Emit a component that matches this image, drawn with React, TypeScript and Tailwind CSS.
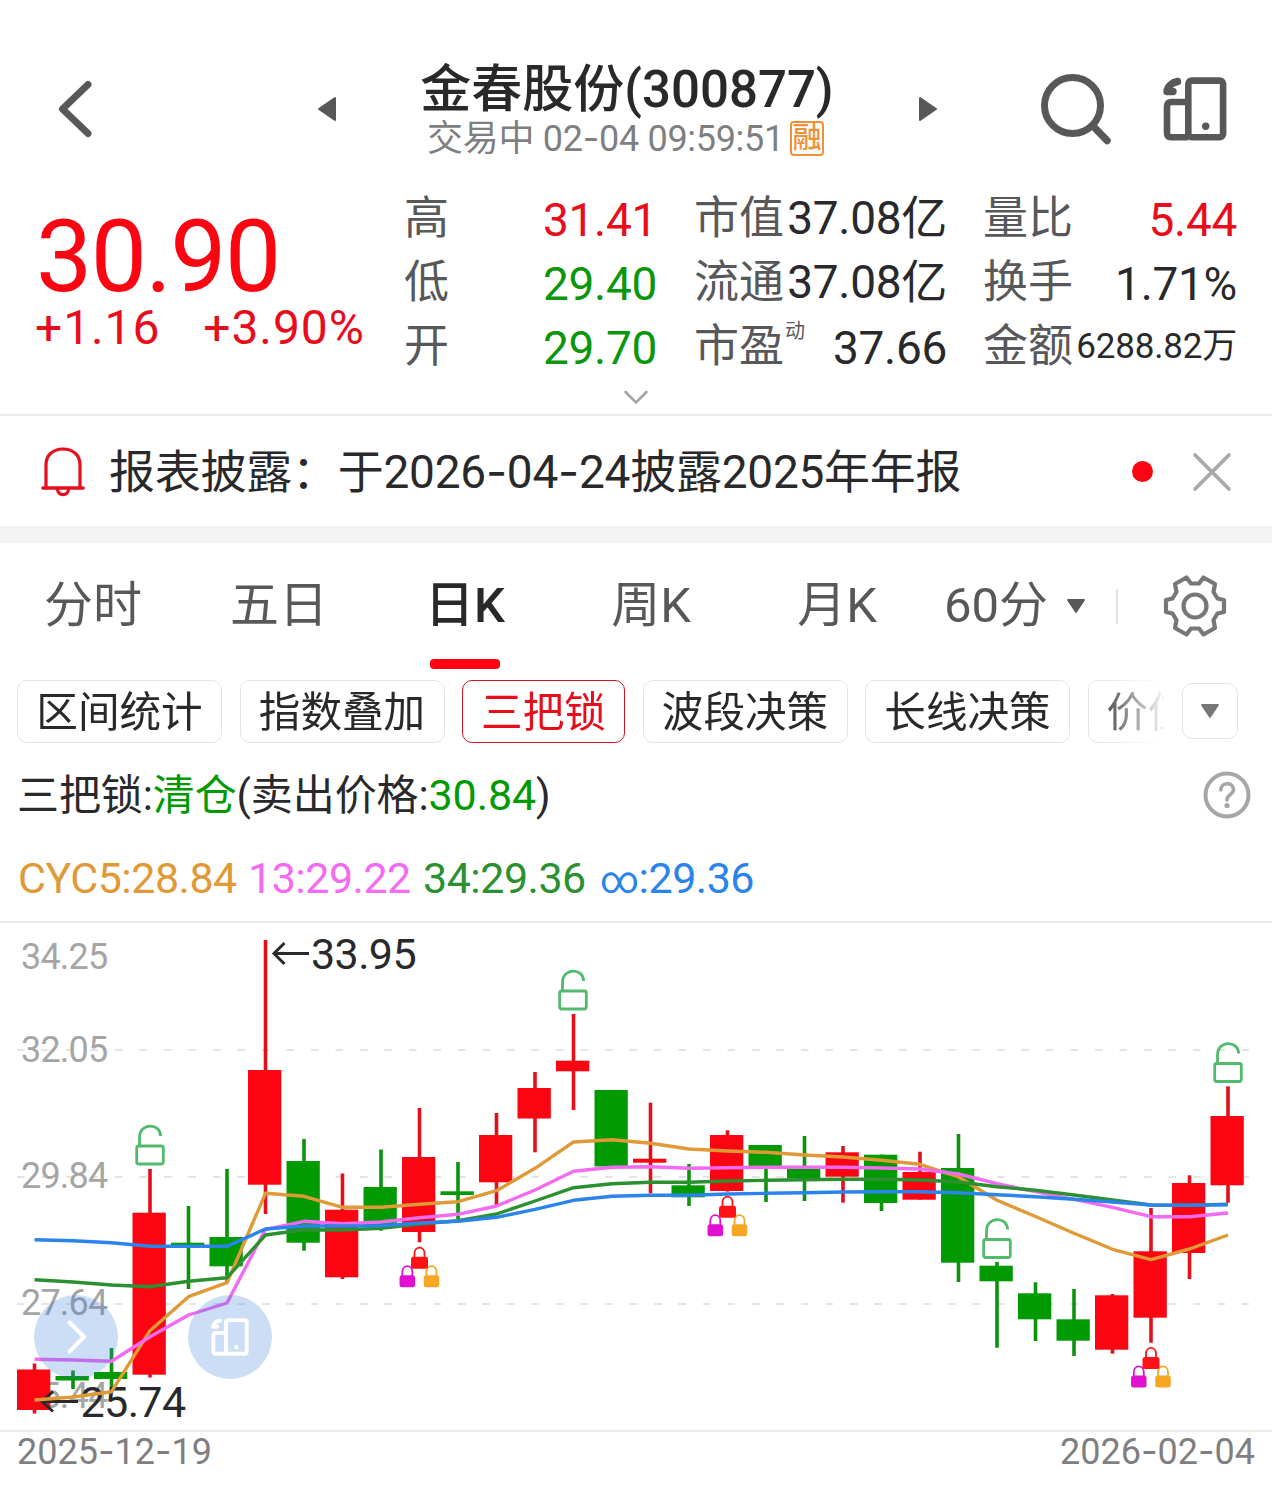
import { Fragment } from 'react'
import clsx from 'clsx'

const RED = '#fa0511'
const GREEN = '#029a02'

type Candle = [up: 0 | 1, high: number, top: number, bottom: number, low: number]

const candles: Candle[] = [
  [1, 1363.5, 1369.5, 1410, 1413.5],
  [0, 1370.5, 1376, 1380.5, 1389],
  [0, 1348, 1372, 1379, 1391],
  [1, 1169, 1212.7, 1374.7, 1377.5],
  [0, 1206, 1242.7, 1247, 1289],
  [0, 1169, 1237, 1266.3, 1283],
  [1, 940, 1070, 1184.7, 1214],
  [0, 1139, 1161, 1242.7, 1250.7],
  [1, 1173.5, 1209.7, 1277.3, 1279],
  [0, 1149.5, 1187, 1225, 1230.7],
  [1, 1108, 1157, 1232, 1242.3],
  [0, 1162, 1191.3, 1195, 1219],
  [1, 1113, 1135, 1182.3, 1207],
  [1, 1072, 1088, 1118.5, 1152.3],
  [1, 1014, 1060.7, 1071.3, 1110],
  [0, 1090, 1090, 1166.5, 1166.5],
  [1, 1102.7, 1158.7, 1162.7, 1193.3],
  [0, 1164, 1185.3, 1197.3, 1206],
  [1, 1130.3, 1135, 1191, 1191.7],
  [0, 1145, 1145, 1166, 1202],
  [0, 1136, 1168, 1178.3, 1201],
  [1, 1146, 1152.3, 1176.7, 1202.7],
  [0, 1154.7, 1154.7, 1203, 1211],
  [1, 1151.7, 1172, 1199.7, 1199.7],
  [0, 1134, 1168, 1262.7, 1282],
  [0, 1262, 1265.7, 1281.3, 1347.7],
  [0, 1282.3, 1293.3, 1319.3, 1341],
  [0, 1289, 1319.3, 1340.7, 1356],
  [1, 1294, 1295.3, 1349.7, 1353.7],
  [1, 1208, 1251.3, 1317.7, 1342.7],
  [1, 1175.3, 1183, 1253, 1279],
  [1, 1086.3, 1116, 1185.3, 1202.7],
]

const averages = [
  {
    color: '#df9a37',
    points: [1400, 1397, 1391.7, 1330.7, 1296.7, 1282.7, 1193.3, 1196.3, 1207.3, 1207.3, 1204.3, 1201.7, 1190.7, 1168.3, 1142, 1139.7, 1143.3, 1149, 1151, 1152.3, 1155, 1157, 1160.3, 1164.3, 1177, 1200.3, 1216.5, 1233.3, 1249.3, 1259.7, 1249, 1235],
  },
  {
    color: '#f26bf2',
    points: [1359.3, 1360, 1361.3, 1336.7, 1315, 1303, 1229.3, 1221.3, 1223.7, 1222, 1217.7, 1214.3, 1206, 1190, 1171.3, 1167.3, 1166.7, 1168.3, 1167.7, 1167.3, 1167.3, 1167.3, 1168, 1169, 1174, 1183.7, 1191.7, 1199.3, 1207.3, 1216.7, 1216.7, 1213],
  },
  {
    color: '#2a9030',
    points: [1279.7, 1282, 1285, 1286.7, 1281.3, 1277.7, 1235, 1229.7, 1230, 1228.3, 1224, 1220.7, 1214, 1201, 1187.7, 1183.7, 1182.3, 1182.3, 1181, 1180.3, 1179.7, 1179.3, 1179.3, 1180, 1182, 1186.7, 1190.3, 1195, 1200, 1205, 1205.3, 1204.3],
  },
  {
    color: '#2b83ec',
    points: [1239.7, 1240.7, 1242.7, 1246.3, 1246.3, 1246.3, 1229, 1226, 1226, 1225.7, 1223, 1221.3, 1217.3, 1209.3, 1200.3, 1196.3, 1195.3, 1195.3, 1194, 1193.3, 1192.7, 1192, 1191.7, 1191.7, 1192.7, 1194.7, 1196.7, 1199.3, 1202, 1205, 1205.3, 1204.7],
  },
]

const priceLabels: [string, number][] = [
  ['34.25', 969],
  ['32.05', 1061.5],
  ['29.84', 1188],
  ['27.64', 1315],
  ['25.44', 1407.5],
]

const candleX = (i: number) => 34.5 + 38.5 * i

// Roboto's hyphen is too short next to its digits, Inter's is wide enough
function Num({ children }: { children: string }) {
  return (
    <>
      {children.split('-').map((part, i) => (
        <Fragment key={i}>
          {i > 0 && <span className="font-['Inter'] font-normal">-</span>}
          {part}
        </Fragment>
      ))}
    </>
  )
}

function PhoneIcon({ className }: { className?: string }) {
  return (
    <svg viewBox="0 0 64 64" fill="none" stroke="currentColor" strokeWidth="6.6" className={className}>
      <rect x="25.3" y="3.6" width="34.8" height="56.6" rx="3.5" />
      <path d="M25.3 25H8.5Q4 25 4 29.5V56Q4 60.2 8.5 60.2H25.3" />
      <path d="M14.5 4.500C9 5.500 4.500 9.500 4 14.500H10" strokeWidth="7.4" strokeLinecap="round" strokeLinejoin="round" />
      <circle cx="42.7" cy="49.3" r="3.7" fill="currentColor" stroke="none" />
    </svg>
  )
}

function Triangle({ className }: { className?: string }) {
  return (
    <svg viewBox="0 0 20 14" className={className}>
      <path d="M2 1H18L10 13Z" fill="currentColor" stroke="currentColor" strokeWidth="1.8" strokeLinejoin="round" />
    </svg>
  )
}

function Header() {
  return (
    <header className="flex h-[160px] items-center pt-[58px] text-[#58585a]">
      <svg viewBox="0 0 36 58" className="ml-[57px] h-[58px] w-[36px]" fill="none" stroke="currentColor" strokeWidth="7" strokeLinecap="round" strokeLinejoin="round">
        <path d="M31 4.5L5.5 29L31 53.5" />
      </svg>
      <svg viewBox="0 0 20 26" className="ml-[224px] h-[26px] w-[20px]">
        <path d="M18 2V24L2 13Z" fill="currentColor" stroke="currentColor" strokeWidth="2" strokeLinejoin="round" />
      </svg>
      <div className="ml-[70px] w-[440px] whitespace-nowrap text-center">
        <h1 className="pt-px text-[51px] font-medium leading-[57px] text-[#29292b]">金春股份(300877)</h1>
        <div className="flex items-center justify-center pr-[3px] text-[36px] leading-[40px] tracking-[-0.3px] text-[#7f7f81]">
          <span>
            交易中 <Num>02-04 09:59:51</Num>
          </span>
          <span className="ml-[6px] mt-px flex h-[35px] w-[34px] items-center justify-center rounded-[4px] border-2 border-[#f0913a] pb-px text-[29px] font-medium leading-[30px] tracking-normal text-[#f0913a]">
            融
          </span>
        </div>
      </div>
      <svg viewBox="0 0 20 26" className="ml-[71px] h-[26px] w-[20px]">
        <path d="M2 2V24L18 13Z" fill="currentColor" stroke="currentColor" strokeWidth="2" strokeLinejoin="round" />
      </svg>
      <svg viewBox="0 0 72 72" className="ml-[102px] size-[72px]" fill="none" stroke="currentColor" strokeLinecap="round">
        <circle cx="32.5" cy="32.5" r="28" strokeWidth="7" />
        <path d="M53 53L67 67.5" strokeWidth="7.4" />
      </svg>
      <PhoneIcon className="ml-[51px] size-[64px]" />
    </header>
  )
}

function StatRow({ label, value, sup, low = false, className }: {
  label: string
  value: string
  sup?: string
  low?: boolean
  className?: string
}) {
  return (
    <div className="flex h-[64px] items-start justify-between whitespace-nowrap">
      <span className="flex text-[45px] leading-[62px] text-[#58585a]">
        {label}
        {sup && <sup className="top-0 ml-px text-[20px] leading-[31px]">{sup}</sup>}
      </span>
      <span className={clsx(low ? 'leading-[64px]' : 'leading-[60px]', className ?? 'text-[46px] tracking-[-0.3px] text-[#29292b]')}>{value}</span>
    </div>
  )
}

function Quote() {
  return (
    <section className="flex h-[220px] pl-[34px] pr-[34px] pt-[28px]">
      <div className="w-[370px] pt-[22px] text-[#fa0511]">
        <div className="pl-[2px] text-[100px] leading-[94px] tracking-[-1.5px]">30.90</div>
        <div className="flex gap-[43px] whitespace-nowrap pl-px text-[48px] leading-[48px] tracking-[0.9px] text-[#e80d1b]">
          <span>+1.16</span>
          <span>+3.90%</span>
        </div>
      </div>
      <div className="w-[253px]">
        <StatRow label="高" value="31.41" low className="text-[46px] tracking-[-0.3px] text-[#e80d1b]" />
        <StatRow label="低" value="29.40" low className="text-[46px] tracking-[-0.3px] text-[#0c960c]" />
        <StatRow label="开" value="29.70" low className="text-[46px] tracking-[-0.3px] text-[#0c960c]" />
      </div>
      <div className="ml-[37px] w-[253px]">
        <StatRow label="市值" value="37.08亿" />
        <StatRow label="流通" value="37.08亿" />
        <StatRow label="市盈" sup="动" value="37.66" low />
      </div>
      <div className="ml-[36px] w-[254px]">
        <StatRow label="量比" value="5.44" low className="text-[46px] tracking-[-0.3px] text-[#e80d1b]" />
        <StatRow label="换手" value="1.71%" low />
        <StatRow label="金额" value="6288.82万" className="pt-px text-[35px] tracking-[-0.2px] text-[#29292b]" />
      </div>
    </section>
  )
}

function Notice() {
  return (
    <section className="flex h-[112px] items-center border-t-2 border-[#ebebeb] pt-px">
      <svg viewBox="0 0 44 52" className="ml-[41px] h-[52px] w-[44px]" fill="none" stroke="#e80d1b" strokeWidth="3.2">
        <path d="M5 42V19C5 9 12 3 22 3S39 9 39 19V42" />
        <path d="M2 42H42" strokeLinecap="round" strokeWidth="3.6" />
        <path d="M16.5 43C16.5 50.5 27.5 50.5 27.5 43" />
      </svg>
      <p className="ml-[24px] flex-1 whitespace-nowrap text-[46px] leading-[60px] tracking-[-0.25px] text-[#29292b]">
        <Num>报表披露：于2026-04-24披露2025年年报</Num>
      </p>
      <span className="size-[21px] rounded-full bg-[#fa0511]" />
      <svg viewBox="0 0 40 40" className="ml-[39px] mr-[40px] size-[40px]" fill="none" stroke="#a6a6a6" strokeWidth="3.6" strokeLinecap="round">
        <path d="M3 3L37 37M37 3L3 37" />
      </svg>
    </section>
  )
}

function PeriodTabs() {
  const tabs = ['分时', '五日', '日K', '周K', '月K']
  return (
    <nav className="flex h-[126px] items-center whitespace-nowrap text-[49px] leading-[60px] text-[#58585a]">
      {tabs.map((tab) => {
        const active = tab === '日K'
        return (
          <div key={tab} className={clsx('relative flex h-full w-[186px] items-center justify-center pb-px', active && 'font-medium text-[#29292b]')}>
            {tab}
            {active && <span className="absolute bottom-0 left-[58px] h-[10px] w-[70px] rounded-[4px] bg-[#fa0511]" />}
          </div>
        )
      })}
      <span className="ml-[14px] pb-px">60分</span>
      <Triangle className="ml-[18px] h-[14px] w-[20px]" />
      <span className="ml-[30px] h-[35px] w-[2px] bg-[#e2e2e2]" />
      <svg viewBox="0 0 64 64" className="ml-[45px] size-[64px]" fill="none" stroke="#77777a" strokeWidth="4.2" strokeLinejoin="round">
        <path d="M23.5 3.500L28 9.500H36L40.500 3.500L52 10L50.500 18L54.500 24.500L61 26V38L54.500 39.500L50.500 46L52 54L40.500 60.500L36 54.500H28L23.500 60.500L12 54L13.500 46L9.500 39.500L3 38V26L9.500 24.500L13.500 18L12 10Z" />
        <circle cx="32" cy="32" r="11.5" />
      </svg>
    </nav>
  )
}

function Chips() {
  const chips = ['区间统计', '指数叠加', '三把锁', '波段决策', '长线决策']
  return (
    <div className="flex h-[74px] items-start pl-[17px] pt-[11px] text-[41.6px] text-[#29292b]">
      <div className="flex w-[1147px] gap-[17.5px] overflow-hidden [mask-image:linear-gradient(to_right,black_1075px,transparent_1150px)]">
        {chips.map((chip) => (
          <div
            key={chip}
            className={clsx(
              'h-[63px] shrink-0 whitespace-nowrap rounded-[10px] border pt-px text-center leading-[62px]',
              chip === '三把锁' ? 'w-[163px] border-[#d01522] text-[#e80d1b]' : 'w-[205px] border-[#e4e4e4]',
            )}
          >
            {chip}
          </div>
        ))}
        <div className="h-[63px] w-[100px] shrink-0 overflow-hidden whitespace-nowrap rounded-l-[10px] border border-[#e4e4e4] pl-[18px] pt-px leading-[62px]">价值</div>
      </div>
      <button className="ml-[18px] mt-[3px] flex h-[56px] w-[56px] items-center justify-center rounded-[10px] border border-[#e4e4e4]">
        <Triangle className="h-[14px] w-[20px] text-[#77777a]" />
      </button>
    </div>
  )
}

function Indicators() {
  return (
    <section className="whitespace-nowrap">
      <div className="flex h-[103px] items-center justify-between pl-[17px] pr-[21px] text-[42px] text-[#29292b]">
        <p className="pt-[2px] tracking-[-0.1px]">
          三把锁:<span className="text-[#029a02]">清仓</span>(卖出价格:
          <span className="text-[43px] text-[#029a02]">30.84</span>)
        </p>
        <svg viewBox="0 0 48 48" className="size-[48px]" fill="none" stroke="#a6a6a6">
          <circle cx="24" cy="24" r="21.5" strokeWidth="4" />
          <path d="M17.8 19C17.8 10.5 30.5 10.8 30.5 18.5C30.5 23.5 24 23.5 24 29" strokeWidth="3.6" strokeLinecap="round" />
          <circle cx="24" cy="34.5" r="2.6" fill="#a6a6a6" stroke="none" />
        </svg>
      </div>
      <div className="mb-[10px] flex h-[65px] items-center pl-[18px] text-[43px] tracking-[-0.5px]">
        <span className="w-[230px] text-[#df9a37]">CYC5:28.84</span>
        <span className="w-[175px] text-[#f26bf2]">13:29.22</span>
        <span className="w-[177px] text-[#2a9030]">34:29.36</span>
        <span className="text-[#2b83ec]">
          <span className="text-[38px]">∞</span>:29.36
        </span>
      </div>
    </section>
  )
}

// open lock: marks a sell signal above the candle
function OpenLock({ x, y }: { x: number; y: number }) {
  return (
    <g transform={`translate(${x} ${y})`} fill="none" stroke="#52ba6c" strokeWidth="2.8">
      <rect x="-13.3" y="-18.500" width="26.600" height="18" rx="2" />
      <path d="M-10.500 -18.500V-27C-10.500 -42 10.300 -42 10.600 -28.500" />
    </g>
  )
}

function SmallLock({ x, y, color, w = 15.5 }: { x: number; y: number; color: string; w?: number }) {
  return (
    <g transform={`translate(${x} ${y})`}>
      <path d="M-5 -11V-15.500C-5 -23 5 -23 5 -15.500V-11" fill="none" stroke={color} strokeWidth="1.8" />
      <rect x={-w / 2} y="-12" width={w} height="12" rx="2.5" fill={color} />
    </g>
  )
}

function TripleLock({ x, y }: { x: number; y: number }) {
  return (
    <g>
      <SmallLock x={x - 12.2} y={y} color="#df10d0" />
      <SmallLock x={x + 12} y={y} color="#f5a623" />
      <SmallLock x={x} y={y - 18.5} color="#ff1216" w={17} />
    </g>
  )
}

function Chart() {
  return (
    <section className="relative h-[511px] border-y-2 border-[#ebebeb]">
      <svg viewBox="0 923 1272 507" className="block h-[507px] w-[1272px]">
        {[1050, 1177, 1304].map((y) => (
          <line key={y} x1="17" x2="1249" y1={y} y2={y} stroke="#e4e4e4" strokeWidth="2" strokeDasharray="7.5 17" />
        ))}
        {priceLabels.map(([label, y]) => (
          <text key={label} x="21" y={y} fontSize="36" letterSpacing="-0.8" fill="#a5a5a5">{label}</text>
        ))}
        {candles.map(([up, high, top, bottom, low], i) => {
          const x = candleX(i)
          return (
            <g key={i} fill={up ? RED : GREEN}>
              <rect x={x - 1.8} y={high} width="3.6" height={low - high} fill={up ? '#e3101c' : '#0c930c'} />
              <rect x={x - 17.5} y={top} width="33.3" height={bottom - top} />
            </g>
          )
        })}
        <g fill="none" stroke="#29292b" strokeWidth="3">
          <path d="M309 953.5H274M284.5 943L274 953.5L284.5 964" />
          <path d="M78 1401.5H42M53 1391.5L42 1401.5L53 1411.5" />
        </g>
        <g fontSize="43" letterSpacing="-0.6" fill="#29292b">
          <text x="311" y="969">33.95</text>
          <text x="80.5" y="1417">25.74</text>
        </g>
        {averages.map(({ color, points }) => (
          <polyline
            key={color}
            points={points.map((y, i) => `${candleX(i)},${y}`).join(' ')}
            fill="none"
            stroke={color}
            strokeWidth="3.4"
            strokeLinejoin="round"
          />
        ))}
        <OpenLock x={150} y={1164.5} />
        <OpenLock x={573} y={1009.5} />
        <OpenLock x={997} y={1258} />
        <OpenLock x={1228} y={1082} />
        <TripleLock x={419.5} y={1287.3} />
        <TripleLock x={727.5} y={1236.3} />
        <TripleLock x={1151} y={1387.5} />
      </svg>
      <button className="absolute left-[34px] top-[372px] flex size-[84px] items-center justify-center rounded-full bg-[#3278dc]/25">
        <svg viewBox="0 0 20 34" className="ml-[2px] h-[34px] w-[20px]" fill="none" stroke="#fff" strokeWidth="4" strokeLinecap="round" strokeLinejoin="round">
          <path d="M2.5 2.5L17 17L2.5 31.5" />
        </svg>
      </button>
      <button className="absolute left-[188px] top-[372px] flex size-[84px] items-center justify-center rounded-full bg-[#3278dc]/25 text-white">
        <PhoneIcon className="size-[38px]" />
      </button>
    </section>
  )
}

export default function App() {
  return (
    <main className="h-[1486px] w-[1272px] overflow-hidden bg-white font-['Roboto','Noto_Sans_CJK_SC',sans-serif]">
      <Header />
      <Quote />
      <div className="flex h-[34px] justify-center pt-[10px]">
        <svg viewBox="0 0 26 15" className="h-[15px] w-[26px]" fill="none" stroke="#a6a6a6" strokeWidth="2.6" strokeLinecap="round">
          <path d="M2.5 2L13 12.5L23.5 2" />
        </svg>
      </div>
      <Notice />
      <div className="h-[17px] bg-[#f4f4f4]" />
      <PeriodTabs />
      <Chips />
      <Indicators />
      <Chart />
      <footer className="flex justify-between px-[17px] text-[36px] leading-[38px] text-[#7f7f81]">
        <span><Num>2025-12-19</Num></span>
        <span><Num>2026-02-04</Num></span>
      </footer>
    </main>
  )
}
